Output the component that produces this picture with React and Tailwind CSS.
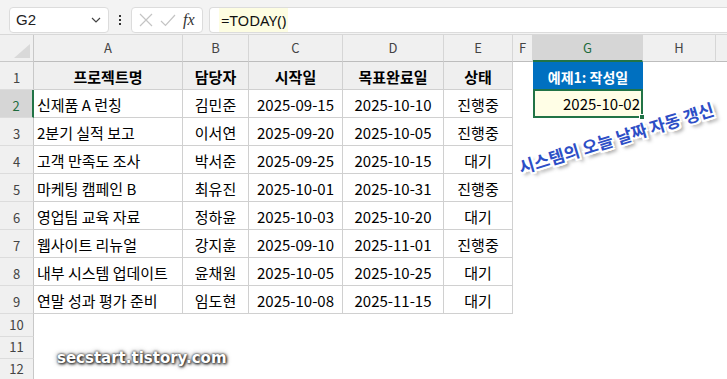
import React from "react";

const COLS = [
  { l: "A", w: "w-[149px]" },
  { l: "B", w: "w-[66px]" },
  { l: "C", w: "w-[94px]" },
  { l: "D", w: "w-[101px]" },
  { l: "E", w: "w-[69px]" },
  { l: "F", w: "w-[20px]" },
  { l: "G", w: "w-[110px]" },
  { l: "H", w: "w-[73px]" },
];

const DATA = [
  ["신제품 A 런칭", "김민준", "2025-09-15", "2025-10-10", "진행중"],
  ["2분기 실적 보고", "이서연", "2025-09-20", "2025-10-05", "진행중"],
  ["고객 만족도 조사", "박서준", "2025-09-25", "2025-10-15", "대기"],
  ["마케팅 캠페인 B", "최유진", "2025-10-01", "2025-10-31", "진행중"],
  ["영업팀 교육 자료", "정하윤", "2025-10-03", "2025-10-20", "대기"],
  ["웹사이트 리뉴얼", "강지훈", "2025-09-10", "2025-11-01", "진행중"],
  ["내부 시스템 업데이트", "윤채원", "2025-10-05", "2025-10-25", "대기"],
  ["연말 성과 평가 준비", "임도현", "2025-10-08", "2025-11-15", "대기"],
];

const HEAD = ["프로젝트명", "담당자", "시작일", "목표완료일", "상태"];

function RowHead({ n, sel, h }) {
  return (
    <div
      className={`w-[34px] shrink-0 ${h} flex items-end justify-center pb-[5px] text-[13px] leading-none border-b border-[#dcdcdc] ${
        sel
          ? "bg-[#d6d6d6] text-[#1e6b3c] border-r-2 border-r-[#217346]"
          : "bg-[#f0f0f0] text-[#444] border-r border-r-[#c8c8c8]"
      }`}
    >
      {n}
    </div>
  );
}

function TCell({ w, children, align = "justify-center", bold, bg = "bg-white" }) {
  return (
    <div
      className={`${w} shrink-0 h-[28px] flex items-end ${align} pb-[5px] border-r border-b border-[#d0d0d0] ${bg} text-[15px] leading-none text-black whitespace-nowrap ${
        bold ? "font-bold text-[14px]" : ""
      }`}
    >
      {children}
    </div>
  );
}

export default function App() {
  return (
    <div className="relative w-[727px] h-[379px] overflow-hidden bg-white font-['Noto_Sans_CJK_KR','Noto_Sans',sans-serif]">
      {/* Toolbar */}
      <div className="h-[34px] bg-[#f3f3f3] flex items-start pt-[7px] pl-[9px]">
        <div className="w-[100px] h-[26px] bg-white rounded-[4px] border border-[#dcdcdc] flex items-center justify-between pl-[6px] pr-[6px]">
          <span className="text-[15px] text-[#222] font-['Liberation_Sans',sans-serif]">G2</span>
          <svg width="10" height="6" viewBox="0 0 10 6" className="mr-[1px]">
            <path d="M1 1 L5 5 L9 1" fill="none" stroke="#444" strokeWidth="1.2" />
          </svg>
        </div>
        <div className="w-[22px] h-[26px] flex flex-col items-center justify-center gap-[2px]">
          <div className="w-[2px] h-[2px] bg-[#333]" />
          <div className="w-[2px] h-[2px] bg-[#333]" />
          <div className="w-[2px] h-[2px] bg-[#333]" />
        </div>
        <div className="w-[72px] h-[26px] bg-white rounded-[4px] border border-[#dcdcdc] flex items-center pl-[7px] gap-[7px]">
          <svg width="14" height="14" viewBox="0 0 14 14">
            <path d="M1 1 L13 13 M13 1 L1 13" stroke="#c4c4c4" strokeWidth="1.2" />
          </svg>
          <svg width="16" height="13" viewBox="0 0 16 13">
            <path d="M1 7 L5.5 11.5 L15 1" fill="none" stroke="#c4c4c4" strokeWidth="1.2" />
          </svg>
          <span className="text-[16px] italic font-['Liberation_Serif',serif] text-[#333] leading-none">fx</span>
        </div>
        <div className="ml-[6px] flex-1 h-[26px] bg-white rounded-l-[4px] border border-r-0 border-[#dcdcdc] flex items-stretch pl-[9px]">
          <div className="bg-[#fdfde2] px-[2px] flex items-center text-[15px] text-[#111] font-['Noto_Sans',sans-serif]">
            =TODAY()
          </div>
        </div>
      </div>

      {/* Column headers */}
      <div className="flex h-[28px] bg-[#f0f0f0] border-t border-[#d8d8d8]">
        <div className="w-[34px] shrink-0 relative border-r border-b border-[#c8c8c8]">
          <svg width="16" height="14" viewBox="0 0 16 14" className="absolute right-[3px] bottom-[3px]">
            <path d="M16 0 L16 14 L0 14 Z" fill="#d9d9d9" />
          </svg>
        </div>
        {COLS.map((c) => (
          <div
            key={c.l}
            className={`${c.w} shrink-0 flex items-center justify-center text-[13px] border-r border-[#d6d6d6] ${
              c.l === "G"
                ? "bg-[#d6d6d6] text-[#1e6b3c] border-b-2 border-b-[#217346]"
                : "text-[#444] border-b border-b-[#bdbdbd]"
            }`}
          >
            {c.l}
          </div>
        ))}
        <div className="flex-1 border-b border-[#bdbdbd]" />
      </div>

      {/* Row 1 */}
      <div className="flex">
        <RowHead n={1} h="h-[28px]" />
        {HEAD.map((t, i) => (
          <TCell key={i} w={COLS[i].w} bold bg="bg-[#efefef]">
            {t}
          </TCell>
        ))}
        <div className="w-[20px] shrink-0" />
        <div className="w-[110px] shrink-0 h-[28px] bg-[#0070c0] text-white font-bold text-[14px] leading-none flex items-end justify-center pb-[6px]">
          예제1: 작성일
        </div>
      </div>

      {/* Data rows */}
      {DATA.map((r, ri) => (
        <div key={ri} className="flex">
          <RowHead n={ri + 2} h="h-[28px]" sel={ri === 0} />
          <TCell w={COLS[0].w} align="justify-start pl-[3px]">{r[0]}</TCell>
          <TCell w={COLS[1].w}>{r[1]}</TCell>
          <TCell w={COLS[2].w}>{r[2]}</TCell>
          <TCell w={COLS[3].w}>{r[3]}</TCell>
          <TCell w={COLS[4].w}>{r[4]}</TCell>
          <div className="w-[20px] shrink-0" />
          {ri === 0 && (
            <div className="relative w-[110px] shrink-0 h-[29px] -mt-[1px] bg-[#fffee6] border-2 border-[#217346] flex items-end justify-end pr-[1px] pb-[5px] text-[15px] leading-none text-black">
              2025-10-02
              <div className="absolute -right-[4px] -bottom-[4px] w-[6px] h-[6px] bg-[#217346] border border-white" />
            </div>
          )}
        </div>
      ))}

      {/* Empty rows */}
      {[10, 11, 12].map((n) => (
        <div key={n} className="flex">
          <RowHead n={n} h={n === 10 ? "h-[23px]" : "h-[22px]"} />
        </div>
      ))}

      {/* Annotation */}
      <div className="absolute left-[514px] top-[129px] w-[204px] text-center -rotate-[17deg] text-[17px] font-bold leading-none text-[#2d4ec6] whitespace-nowrap [text-shadow:2px_0_0_#fff,-2px_0_0_#fff,0_2px_0_#fff,0_-2px_0_#fff,1px_1px_0_#fff,-1px_-1px_0_#fff,1px_-1px_0_#fff,-1px_1px_0_#fff,2px_2px_0_#fff,-2px_-2px_0_#fff,2px_-2px_0_#fff,-2px_2px_0_#fff,3px_4px_4px_rgba(0,0,0,0.5)]">
        시스템의 오늘 날짜 자동 갱신
      </div>

      {/* Watermark */}
      <div className="absolute left-[57px] top-[351px] text-[15px] font-bold leading-none text-white font-['DejaVu_Sans',sans-serif] [text-shadow:0_0_2px_#333,1px_1px_3px_#000,0_0_5px_#666]">
        secstart.tistory.com
      </div>
    </div>
  );
}
